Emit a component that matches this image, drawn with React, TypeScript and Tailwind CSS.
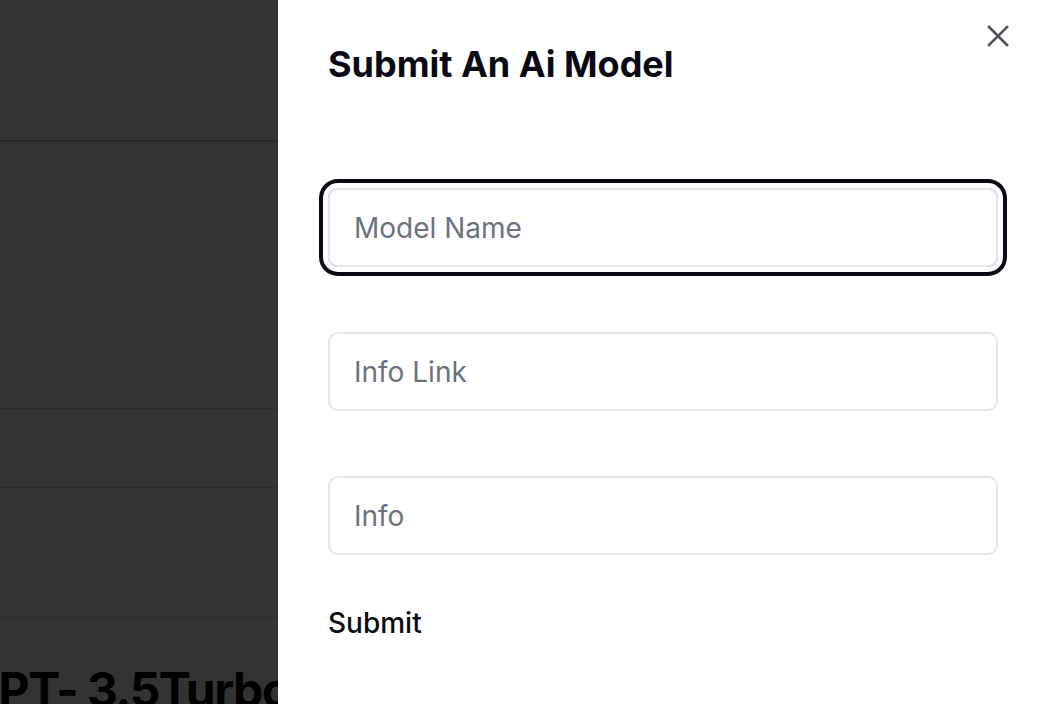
import React from "react";

export default function App() {
  return (
    <div className="relative h-[704px] w-[1038px] overflow-hidden bg-white font-['Inter',sans-serif]">
      {/* background page */}
      <div className="flex h-full flex-col">
        <div className="h-[142px] shrink-0 border-b-2 border-[#c8c8c8]" />
        <div className="h-[267px] shrink-0 border-b border-[#d6d6d6]" />
        <div className="h-[79px] shrink-0 border-b border-[#d6d6d6]" />
        <div className="h-[130px] shrink-0 border-b border-[#d6d6d6]" />
        <div className="shrink-0 pt-[48px]">
          <h2 className="ml-[-36px] whitespace-nowrap text-[48px] font-bold leading-[48px] tracking-[-1.5px] text-black">
            GPT- 3.5Turbo
          </h2>
        </div>
      </div>

      {/* overlay */}
      <div className="absolute inset-0 bg-black/80" />

      {/* sheet */}
      <div className="absolute right-0 top-0 flex h-full w-[760px] flex-col bg-white pl-[50px] pr-[40px]">
        <button className="absolute right-[20px] top-[16px] flex h-[40px] w-[40px] items-center justify-center text-[#52525b]">
          <svg width="22" height="22" viewBox="0 0 22 22" fill="none" stroke="currentColor" strokeWidth="2.6" strokeLinecap="square">
            <path d="M2 2 L20 20 M20 2 L2 20" />
          </svg>
        </button>
        <h1 className="mt-[44px] text-[36px] font-bold leading-[40px] text-[#0a0a14]">
          Submit An Ai Model
        </h1>
        <div className="mt-[104px] flex flex-col gap-[65px]">
          <input
            placeholder="Model Name"
            className="h-[79px] w-full rounded-[10px] border-2 border-[#e5e7eb] px-6 text-[28px] text-gray-900 outline-none placeholder:text-[#6b7280] shadow-[0_0_0_5px_#fff,0_0_0_9px_#0a0a14]"
          />
          <input
            placeholder="Info Link"
            className="h-[79px] w-full rounded-[10px] border-2 border-[#e5e7eb] px-6 text-[28px] text-gray-900 outline-none placeholder:text-[#6b7280]"
          />
          <input
            placeholder="Info"
            className="h-[79px] w-full rounded-[10px] border-2 border-[#e5e7eb] px-6 text-[28px] text-gray-900 outline-none placeholder:text-[#6b7280]"
          />
        </div>
        <button className="mt-[50px] self-start text-[28px] font-medium leading-[36px] text-[#0a0a14]">
          Submit
        </button>
      </div>
    </div>
  );
}
